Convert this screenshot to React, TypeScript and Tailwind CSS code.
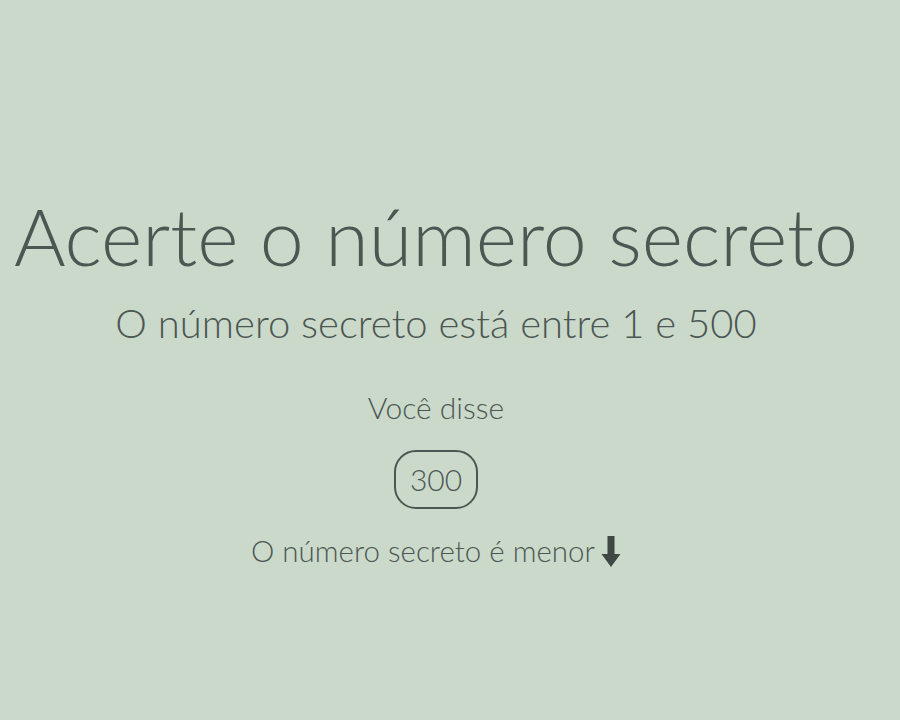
import React from "react";

function ArrowDown() {
  return (
    <svg width="20" height="31" viewBox="0 0 20 31" className="shrink-0" aria-hidden="true">
      <rect x="6.5" y="0" width="7" height="19" fill="#3f4845" />
      <polygon points="0.5,18 19.5,18 10,31" fill="#3f4845" />
    </svg>
  );
}

export default function App() {
  return (
    <div
      className="w-[900px] h-[720px] bg-[#cbd9cb] text-[#4b5752] overflow-hidden"
      style={{ fontFamily: "Lato, 'Open Sans', sans-serif" }}
    >
      <div className="w-[872px] flex flex-col items-center pt-[186px]">
        <h1 className="text-[79px] font-light leading-[100px] whitespace-nowrap">Acerte o número secreto</h1>
        <p className="text-[40px] font-light leading-[48px] mt-[13px] whitespace-nowrap">O número secreto está entre 1 e 500</p>
        <p className="text-[30px] font-light leading-[36px] mt-[42px]">Você disse</p>
        <div className="mt-[25px] h-[59px] px-[14px] border-2 border-[#4b5752] rounded-[22px] flex items-center justify-center text-[30px] font-light">
          300
        </div>
        <p className="text-[29.5px] font-light leading-[36px] mt-[24px] flex items-center gap-[6px]">
          O número secreto é menor
          <ArrowDown />
        </p>
      </div>
    </div>
  );
}
